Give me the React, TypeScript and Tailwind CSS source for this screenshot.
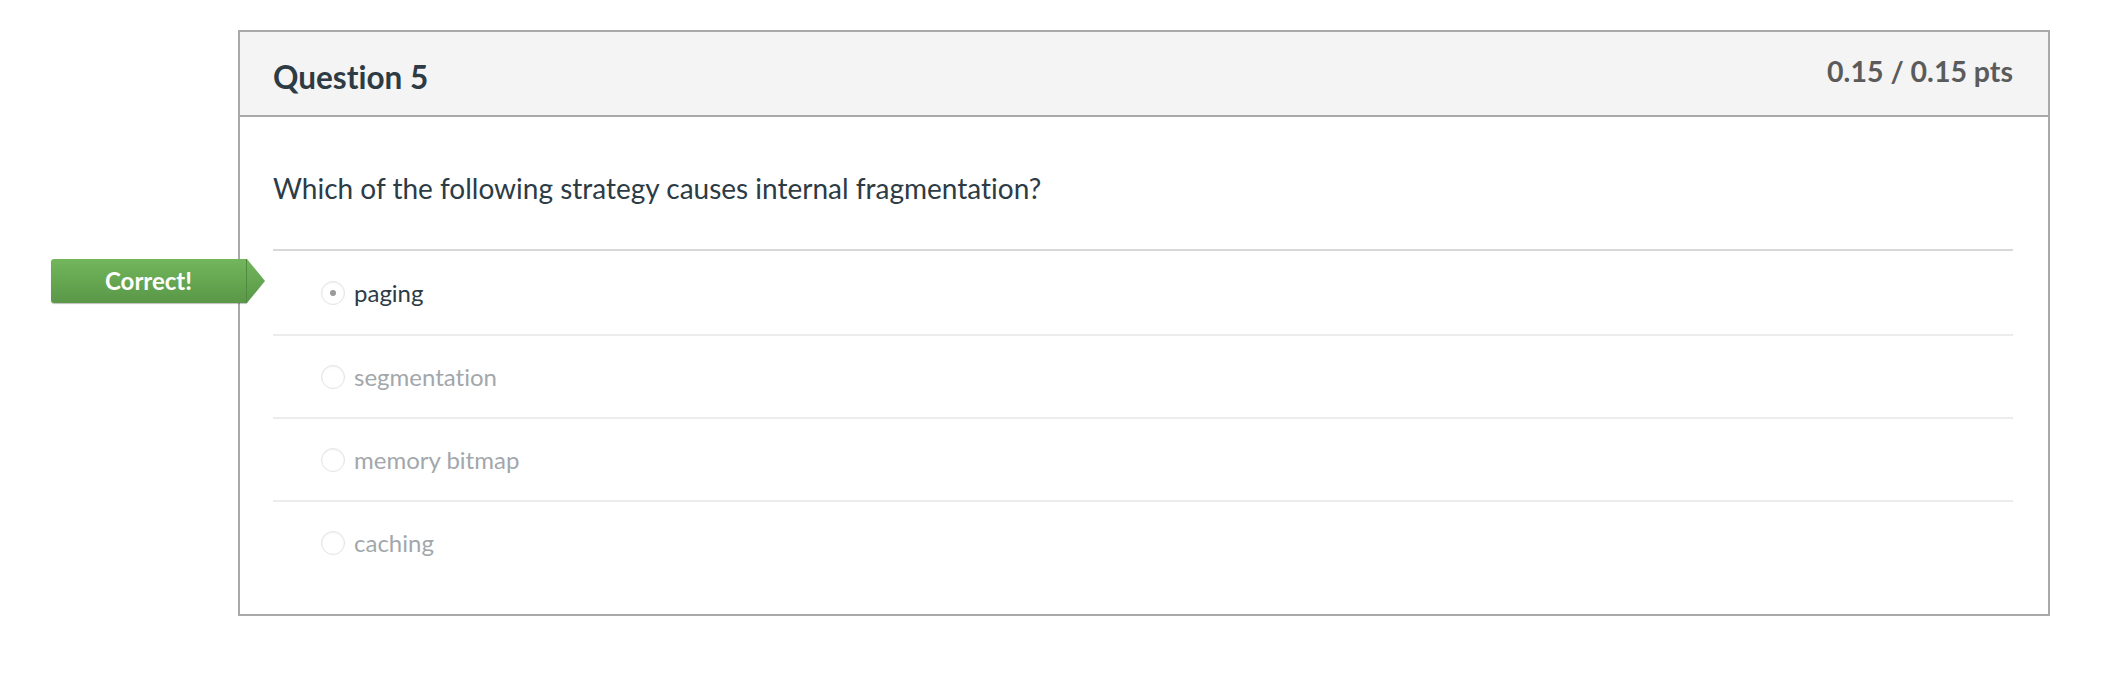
import { Fragment } from 'react';

// ─── Data ─────────────────────────────────────────────────────────────────────

const answers = [
  { id: 'a1', label: 'paging', selected: true },
  { id: 'a2', label: 'segmentation', selected: false },
  { id: 'a3', label: 'memory bitmap', selected: false },
  { id: 'a4', label: 'caching', selected: false },
];

// ─── Correct flag ─────────────────────────────────────────────────────────────

const CorrectFlag = () => (
  <div className="absolute left-[-222px] top-[8px] flex h-[44px] items-stretch">
    <div className="flex w-[196px] items-center justify-center rounded-l-[3px] border-r border-[#4f8a3e] bg-gradient-to-b from-[#72b65c] to-[#5a9747] shadow-[0_1px_1px_rgba(0,0,0,0.25)]">
      <span className="text-[24px] font-bold leading-none text-white">Correct!</span>
    </div>
    <svg width="18" height="44" viewBox="0 0 18 44" className="block">
      <defs>
        <linearGradient id="flagArrow" x1="0" y1="0" x2="0" y2="1">
          <stop offset="0" stopColor="#72b65c" />
          <stop offset="1" stopColor="#5a9747" />
        </linearGradient>
      </defs>
      <polygon points="0,0 18,22 0,44" fill="url(#flagArrow)" />
    </svg>
  </div>
);

// ─── Radio ────────────────────────────────────────────────────────────────────

const Radio = ({ checked }: { checked: boolean }) => (
  <span className="flex h-[24px] w-[24px] shrink-0 items-center justify-center rounded-full border border-[#e3e3e3] bg-white shadow-[inset_0_1px_2px_rgba(0,0,0,0.06)]">
    {checked && <span className="h-[6px] w-[6px] rounded-full bg-[#9a9a9a]" />}
  </span>
);

// ─── Main Component ───────────────────────────────────────────────────────────

export default function App() {
  return (
    <div
      className="min-h-[676px] w-[2106px] bg-white pl-[238px] pt-[30px] [font-variant-ligatures:none]"
      style={{ fontFamily: 'Lato, "Open Sans", sans-serif' }}
    >
      <div className="w-[1812px] border-2 border-[#a9a9a9] bg-white">
        {/* Header */}
        <div className="flex h-[85px] items-center justify-between border-b-2 border-[#a9a9a9] bg-[#f4f4f4] pl-[33px] pr-[35px]">
          <h2 className="pt-[8px] text-[31.5px] font-bold leading-none text-[#2d3b45]">Question 5</h2>
          <div className="pb-[4px] text-[28.5px] font-bold leading-none text-[#5b5b5b]">0.15 / 0.15 pts</div>
        </div>

        {/* Body */}
        <div className="pl-[33px] pr-[35px] pb-[31px]">
          <div className="border-b-2 border-[#d8d8d8] pt-[53px] pb-[43px]">
            <p className="text-[28px] leading-[36px] text-[#2d3b45]">
              Which of the following strategy causes internal fragmentation?
            </p>
          </div>

          {answers.map((a, i) => (
            <Fragment key={a.id}>
              <div
                className={`relative flex h-[83px] items-center gap-[9px] pl-[48px] ${
                  i > 0 ? 'border-t-2 border-[#ececec]' : ''
                }`}
              >
                {i === 0 && <CorrectFlag />}
                <Radio checked={a.selected} />
                <span
                  className={`text-[24px] leading-none ${
                    a.selected ? 'text-[#2d3b45]' : 'text-[#a2a7ab]'
                  }`}
                >
                  {a.label}
                </span>
              </div>
            </Fragment>
          ))}
        </div>
      </div>
    </div>
  );
}
